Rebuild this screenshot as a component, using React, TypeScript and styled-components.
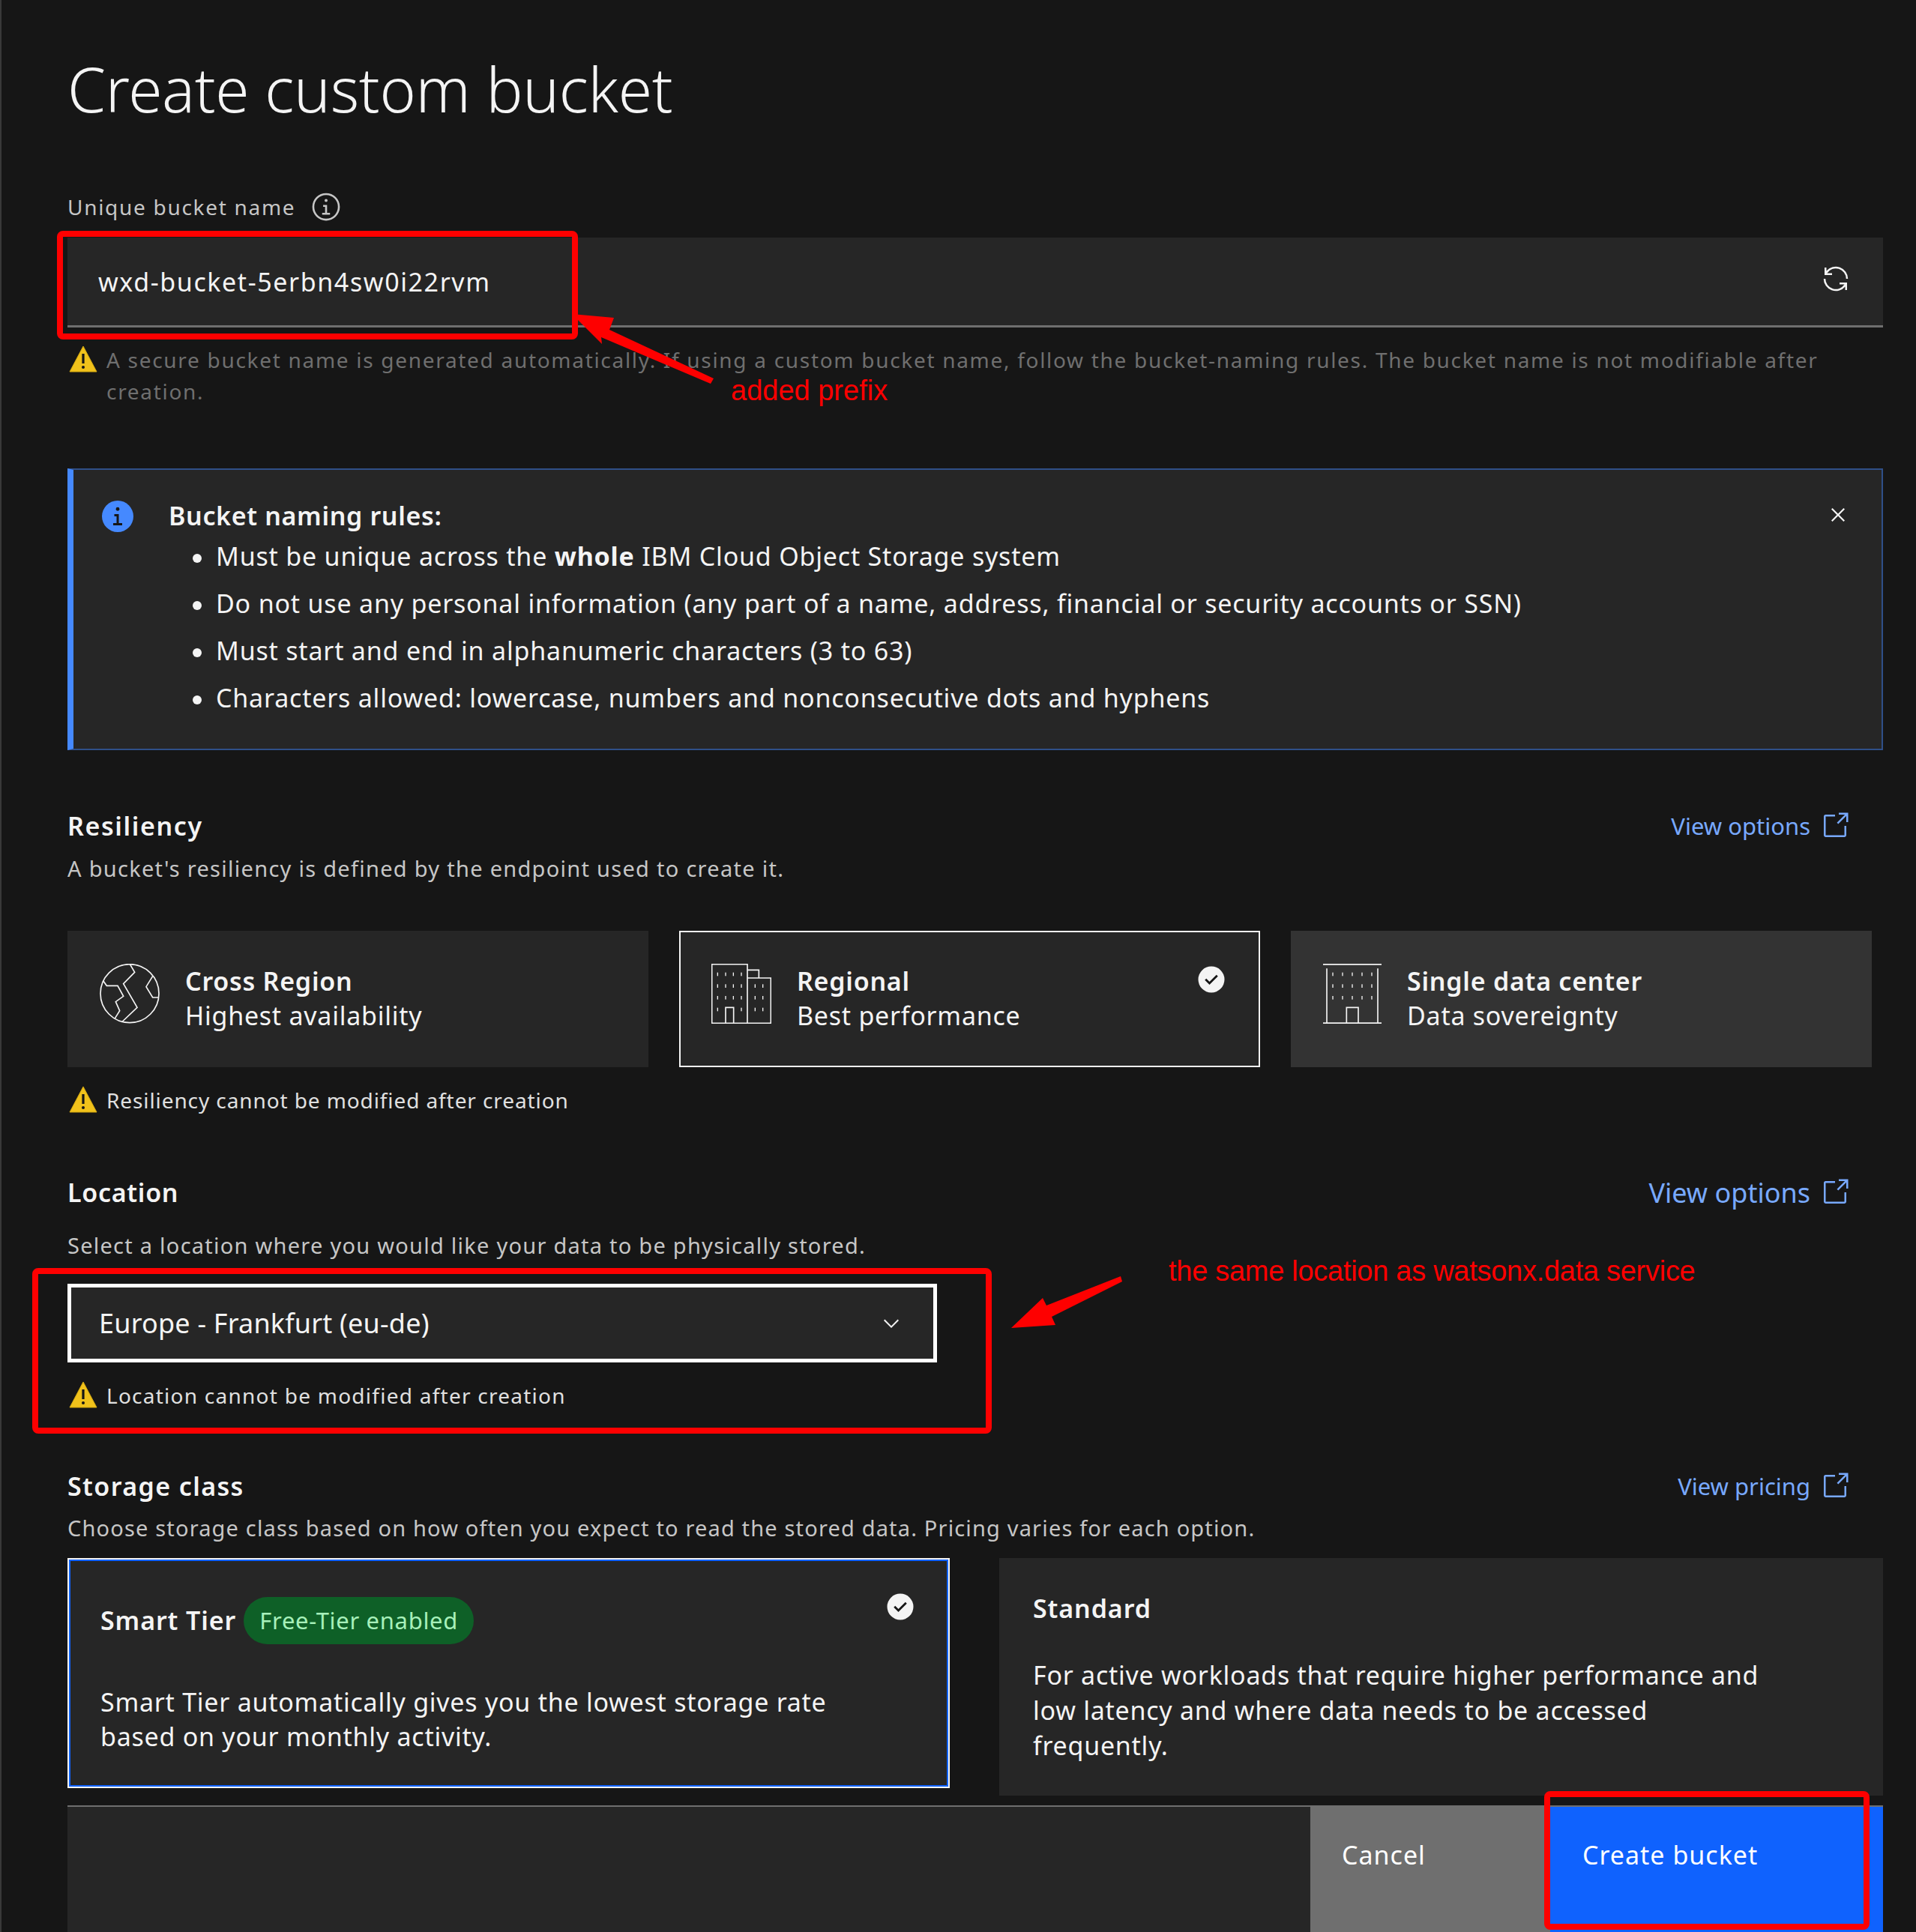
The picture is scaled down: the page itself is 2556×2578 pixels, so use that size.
import React from "react";
import styled, { createGlobalStyle } from "styled-components";

const GlobalStyle = createGlobalStyle`
  html, body { margin: 0; padding: 0; background: #161616; }
  * { box-sizing: border-box; }
`;

const Page = styled.div`
  position: relative;
  width: 2556px;
  height: 2578px;
  overflow: hidden;
  display: flex;
  flex-direction: column;
  background: #161616;
  border-left: 2px solid #393939;
  padding: 0 44px 0 88px;
  font-family: "Noto Sans", "Liberation Sans", sans-serif;
  color: #f4f4f4;
`;

const Title = styled.h1`
  margin: 66px 0 0;
  font-size: 82px;
  line-height: 104px;
  font-weight: 300;
  letter-spacing: -0.3px;
`;

const FieldLabel = styled.div`
  margin-top: 86px;
  height: 40px;
  display: flex;
  align-items: center;
  gap: 20px;
  font-size: 28px;
  letter-spacing: 1.7px;
  color: #c6c6c6;
`;

const InputBar = styled.div`
  margin-top: 21px;
  height: 120px;
  display: flex;
  align-items: center;
  justify-content: space-between;
  padding: 0 43px 0 41px;
  background: #262626;
  border-bottom: 3px solid #6f6f6f;
  font-size: 34px;
  letter-spacing: 1.6px;
  svg { margin-bottom: 8px; }
`;

const Helper = styled.div<{ $top: number; $spacing: number; $dim?: boolean }>`
  margin-top: ${(p) => p.$top}px;
  display: flex;
  gap: 12px;
  padding-left: 2px;
  font-size: 28px;
  line-height: 42px;
  letter-spacing: ${(p) => p.$spacing}px;
  color: ${(p) => (p.$dim ? "#6f6f6f" : "#e0e0e0")};
  svg { flex: none; margin-top: 2px; }
`;

const Notice = styled.div`
  margin-top: 82px;
  height: 376px;
  display: flex;
  padding: 38px 40px 0 35px;
  background: #262626;
  border: 2px solid #2f4f88;
  border-left: 8px solid #4589ff;
  svg:last-child { flex: none; margin-top: 4px; }
`;

const NoticeBody = styled.div`
  flex: 1;
  margin-left: 44px;
`;

const NoticeTitle = styled.div`
  font-size: 34px;
  line-height: 46px;
  font-weight: 600;
  letter-spacing: 0.65px;
`;

const RuleList = styled.ul`
  margin: 0;
  padding: 0 0 0 63px;
  list-style: none;
  font-size: 34px;
  line-height: 63px;
  letter-spacing: 0.8px;
  li::before {
    content: "";
    display: inline-block;
    width: 12px;
    height: 12px;
    margin: 0 19px 4px -31px;
    border-radius: 50%;
    background: #f4f4f4;
  }
`;

const SectionHead = styled.div<{ $top: number }>`
  margin-top: ${(p) => p.$top}px;
  display: flex;
  justify-content: space-between;
  align-items: flex-start;
`;

const Heading = styled.h2<{ $spacing: number }>`
  margin: 0;
  font-size: 34px;
  line-height: 44px;
  font-weight: 600;
  letter-spacing: ${(p) => p.$spacing}px;
`;

const SubText = styled.p<{ $top: number; $spacing: number }>`
  margin: ${(p) => p.$top}px 0 0;
  font-size: 29px;
  line-height: 44px;
  letter-spacing: ${(p) => p.$spacing}px;
  color: #c6c6c6;
`;

const DocLink = styled.a<{ $big?: boolean }>`
  display: flex;
  align-items: center;
  gap: 13px;
  padding-right: 44px;
  height: 44px;
  font-size: ${(p) => (p.$big ? 36 : 31)}px;
  color: #78a9ff;
`;

const TileRow = styled.div`
  margin-top: 61px;
  display: flex;
  gap: 41px;
`;

const Tile = styled.div<{ $selected?: boolean; $raised?: boolean }>`
  position: relative;
  width: 775px;
  height: 182px;
  display: flex;
  align-items: flex-start;
  gap: 34px;
  padding: 44px 0 0 43px;
  background: ${(p) => (p.$raised ? "#333333" : "#262626")};
  box-shadow: ${(p) => (p.$selected ? "inset 0 0 0 2px #f4f4f4" : "none")};
`;

const TileText = styled.div`
  font-size: 34px;
  line-height: 46px;
  letter-spacing: 0.75px;
`;

const TileName = styled.div`
  font-weight: 600;
`;

const CornerCheck = styled.span<{ $top: number; $right: number }>`
  position: absolute;
  top: ${(p) => p.$top}px;
  right: ${(p) => p.$right}px;
  display: flex;
`;

const SelectBox = styled.div`
  margin-top: 29px;
  width: 1160px;
  height: 105px;
  display: flex;
  align-items: center;
  justify-content: space-between;
  padding: 0 40px 0 37px;
  background: #262626;
  border: 5px solid #ffffff;
  font-size: 36px;
  letter-spacing: 0.2px;
`;

const ClassRow = styled.div`
  margin-top: 18px;
  display: flex;
  align-items: flex-start;
  gap: 66px;
`;

const ClassTile = styled.div<{ $selected?: boolean }>`
  position: relative;
  width: ${(p) => (p.$selected ? 1177 : 1179)}px;
  height: ${(p) => (p.$selected ? 307 : 317)}px;
  padding: ${(p) => (p.$selected ? "50px 44px 0 42px" : "44px 44px 0 45px")};
  background: #262626;
  border: ${(p) => (p.$selected ? "2px solid #f4f4f4" : "none")};
  box-shadow: ${(p) => (p.$selected ? "inset 0 0 0 2px #0f62fe" : "none")};
  font-size: 34px;
  line-height: 47px;
  letter-spacing: 0.75px;
`;

const ClassName = styled.div`
  display: flex;
  align-items: center;
  gap: 10px;
  font-weight: 600;
  letter-spacing: 0.9px;
`;

const Pill = styled.span`
  height: 63px;
  display: flex;
  align-items: center;
  padding: 0 21px;
  border-radius: 32px;
  background: #0e6027;
  color: #a7f0ba;
  font-size: 31px;
  font-weight: 400;
  letter-spacing: 0.68px;
`;

const ClassBody = styled.p<{ $top: number; $tight?: boolean }>`
  margin: ${(p) => p.$top}px 0 0;
  max-width: 1000px;
  line-height: ${(p) => (p.$tight ? 46 : 47)}px;
`;

const Footer = styled.div`
  margin-top: 13px;
  flex: 1;
  display: flex;
  justify-content: flex-end;
  background: #262626;
  border-top: 2px solid #6f6f6f;
`;

const FooterButton = styled.button<{ $primary?: boolean }>`
  width: ${(p) => (p.$primary ? 444 : 320)}px;
  padding: 41px 0 0 ${(p) => (p.$primary ? 43 : 42)}px;
  border: none;
  background: ${(p) => (p.$primary ? "#0f62fe" : "#6f6f6f")};
  color: #ffffff;
  font-family: inherit;
  font-size: 34px;
  line-height: 46px;
  letter-spacing: 1px;
  display: flex;
  align-items: flex-start;
`;

const RedBox = styled.div<{ $x: number; $y: number; $w: number; $h: number }>`
  position: absolute;
  left: ${(p) => p.$x - 2}px;
  top: ${(p) => p.$y}px;
  width: ${(p) => p.$w}px;
  height: ${(p) => p.$h}px;
  border: 8px solid #fe0000;
  border-radius: 8px;
`;

const RedNote = styled.span<{ $x: number; $y: number; $tight?: boolean }>`
  position: absolute;
  left: ${(p) => p.$x - 2}px;
  top: ${(p) => p.$y}px;
  font-family: "Liberation Sans", Arial, sans-serif;
  font-size: 38px;
  line-height: 44px;
  letter-spacing: ${(p) => (p.$tight ? -0.28 : 0)}px;
  color: #fe0000;
  white-space: nowrap;
`;

const ArrowLayer = styled.svg`
  position: absolute;
  left: -2px;
  top: 0;
`;

const CarbonIcon = ({ size, color = "#f4f4f4", children }: { size: number; color?: string; children: React.ReactNode }) => (
  <svg width={size} height={size} viewBox="0 0 32 32" fill={color}>
    {children}
  </svg>
);

const WarnIcon = () => (
  <svg width="38" height="36" viewBox="0 0 38 36">
    <path d="M19 1 L37 35 H1 Z" fill="#f1c21b" stroke="#d5a910" strokeWidth="1" />
    <rect x="17.4" y="11" width="3.2" height="13" fill="#161616" />
    <circle cx="19" cy="29" r="2" fill="#161616" />
  </svg>
);

const InfoOutline = () => (
  <CarbonIcon size={42} color="#c6c6c6">
    <polygon points="17 22 17 14 13 14 13 16 15 16 15 22 12 22 12 24 20 24 20 22 17 22" />
    <path d="M16,8a1.5,1.5,0,1,0,1.5,1.5A1.5,1.5,0,0,0,16,8Z" />
    <path d="M16,30A14,14,0,1,1,30,16,14,14,0,0,1,16,30ZM16,4A12,12,0,1,0,28,16,12,12,0,0,0,16,4Z" />
  </CarbonIcon>
);

const InfoFilled = () => (
  <svg width="48" height="48" viewBox="0 0 32 32">
    <circle cx="16" cy="16" r="14" fill="#4589ff" />
    <polygon fill="#161616" points="17 22 17 14 13 14 13 16 15 16 15 22 12 22 12 24 20 24 20 22 17 22" />
    <circle cx="16" cy="9.5" r="1.6" fill="#161616" />
  </svg>
);

const Renew = () => (
  <CarbonIcon size={40}>
    <path d="M12 10H6.78A11 11 0 0 1 27 16h2A13 13 0 0 0 6 7.68V4H4v8h8zM20 22h5.22A11 11 0 0 1 5 16H3a13 13 0 0 0 23 8.32V28h2v-8h-8z" />
  </CarbonIcon>
);

const Close = () => (
  <CarbonIcon size={36}>
    <polygon points="24 9.4 22.6 8 16 14.6 9.4 8 8 9.4 14.6 16 8 22.6 9.4 24 16 17.4 22.6 24 24 22.6 17.4 16 24 9.4" />
  </CarbonIcon>
);

const Launch = () => (
  <CarbonIcon size={40} color="#78a9ff">
    <path d="M26,28H6a2.0027,2.0027,0,0,1-2-2V6A2.0027,2.0027,0,0,1,6,4H16V6H6V26H26V16h2V26A2.0027,2.0027,0,0,1,26,28Z" />
    <polygon points="20 2 20 4 26.586 4 18 12.586 19.414 14 28 5.414 28 12 30 12 30 2 20 2" />
  </CarbonIcon>
);

const Chevron = () => (
  <CarbonIcon size={32}>
    <polygon points="16 22 6 12 7.4 10.6 16 19.2 24.6 10.6 26 12 16 22" />
  </CarbonIcon>
);

const CheckFilled = () => (
  <svg width="40" height="40" viewBox="0 0 32 32">
    <circle cx="16" cy="16" r="12" fill="#161616" />
    <path fill="#f4f4f4" d="M16,2A14,14,0,1,0,30,16,14,14,0,0,0,16,2ZM14,21.5908l-5-5L10.5906,15,14,18.4092,21.41,11l1.5957,1.5859Z" />
  </svg>
);

const GlobeIcon = () => (
  <svg width="80" height="80" viewBox="0 0 240 240" fill="none" stroke="#f4f4f4" strokeWidth="5">
    <circle cx="120" cy="119" r="117" />
    <polyline points="120,0 140,34 95,80 150,175 88,234" />
    <polyline points="14,68 28,88 72,88 95,130 64,152 80,188 60,220" />
    <polyline points="212,50 186,92 212,135 236,135" />
  </svg>
);

const Windows = ({ xs, ys }: { xs: number[]; ys: number[] }) => (
  <>
    {ys.map((y) => xs.map((x) => <rect key={`${x}-${y}`} x={x - 2} y={y - 7} width="4" height="14" fill="#f4f4f4" stroke="none" />))}
  </>
);

const RegionalIcon = () => (
  <svg width="80" height="80" viewBox="60 78 240 240" fill="none" stroke="#f4f4f4" strokeWidth="5">
    <rect x="62" y="80" width="142" height="236" />
    <polyline points="204,103 250,103 250,135" />
    <polyline points="204,135 298,135 298,316 204,316" />
    <polyline points="117,316 117,253 149,253 149,316" />
    <Windows xs={[85, 117, 148, 180]} ys={[120, 167, 214]} />
    <Windows xs={[85, 180]} ys={[261]} />
    <Windows xs={[235, 266]} ys={[167, 214, 261]} />
  </svg>
);

const SingleIcon = () => (
  <svg width="78" height="80" viewBox="78 78 234 240" fill="none" stroke="#f4f4f4" strokeWidth="5">
    <line x1="78" y1="80" x2="312" y2="80" strokeWidth="6" />
    <polyline points="93,97 93,316" />
    <polyline points="297,97 297,316" />
    <line x1="78" y1="316" x2="312" y2="316" strokeWidth="6" />
    <polyline points="172,316 172,253 219,253 219,316" />
    <Windows xs={[117, 156, 195, 234, 273]} ys={[120, 167, 214]} />
  </svg>
);

const App = () => {
  return (
    <Page>
      <GlobalStyle />
      <Title>Create custom bucket</Title>

      <FieldLabel>
        Unique bucket name
        <InfoOutline />
      </FieldLabel>
      <InputBar>
        wxd-bucket-5erbn4sw0i22rvm
        <Renew />
      </InputBar>
      <Helper $top={22} $spacing={1.7} $dim>
        <WarnIcon />
        <div>
          A secure bucket name is generated automatically. If using a custom bucket name, follow the bucket-naming rules. The bucket name is not modifiable after creation.
        </div>
      </Helper>

      <Notice>
        <InfoFilled />
        <NoticeBody>
          <NoticeTitle>Bucket naming rules:</NoticeTitle>
          <RuleList>
            <li>Must be unique across the <b>whole</b> IBM Cloud Object Storage system</li>
            <li>Do not use any personal information (any part of a name, address, financial or security accounts or SSN)</li>
            <li>Must start and end in alphanumeric characters (3 to 63)</li>
            <li>Characters allowed: lowercase, numbers and nonconsecutive dots and hyphens</li>
          </RuleList>
        </NoticeBody>
        <Close />
      </Notice>

      <SectionHead $top={79}>
        <div>
          <Heading $spacing={1.6}>Resiliency</Heading>
          <SubText $top={13} $spacing={1.28}>A bucket's resiliency is defined by the endpoint used to create it.</SubText>
        </div>
        <DocLink>View options <Launch /></DocLink>
      </SectionHead>
      <TileRow>
        <Tile>
          <GlobeIcon />
          <TileText>
            <TileName>Cross Region</TileName>
            Highest availability
          </TileText>
        </Tile>
        <Tile $selected>
          <RegionalIcon />
          <TileText>
            <TileName>Regional</TileName>
            Best performance
          </TileText>
          <CornerCheck $top={45} $right={45}><CheckFilled /></CornerCheck>
        </Tile>
        <Tile $raised>
          <SingleIcon />
          <TileText>
            <TileName>Single data center</TileName>
            Data sovereignty
          </TileText>
        </Tile>
      </TileRow>
      <Helper $top={23} $spacing={0.9}>
        <WarnIcon />
        Resiliency cannot be modified after creation
      </Helper>

      <SectionHead $top={80}>
        <div>
          <Heading $spacing={0.7}>Location</Heading>
          <SubText $top={27} $spacing={1.25}>Select a location where you would like your data to be physically stored.</SubText>
        </div>
        <DocLink $big>View options <Launch /></DocLink>
      </SectionHead>
      <SelectBox>
        Europe - Frankfurt (eu-de)
        <Chevron />
      </SelectBox>
      <Helper $top={23} $spacing={1.25}>
        <WarnIcon />
        Location cannot be modified after creation
      </Helper>

      <SectionHead $top={78}>
        <div>
          <Heading $spacing={1.4}>Storage class</Heading>
          <SubText $top={12} $spacing={1.16}>Choose storage class based on how often you expect to read the stored data. Pricing varies for each option.</SubText>
        </div>
        <DocLink>View pricing <Launch /></DocLink>
      </SectionHead>
      <ClassRow>
        <ClassTile $selected>
          <ClassName>
            Smart Tier
            <Pill>Free-Tier enabled</Pill>
          </ClassName>
          <ClassBody $top={54} $tight>
            Smart Tier automatically gives you the lowest storage rate based on your monthly activity.
          </ClassBody>
          <CornerCheck $top={43} $right={44}><CheckFilled /></CornerCheck>
        </ClassTile>
        <ClassTile>
          <ClassName>Standard</ClassName>
          <ClassBody $top={42}>
            For active workloads that require higher performance and low latency and where data needs to be accessed frequently.
          </ClassBody>
        </ClassTile>
      </ClassRow>

      <Footer>
        <FooterButton>Cancel</FooterButton>
        <FooterButton $primary>Create bucket</FooterButton>
      </Footer>

      <RedBox $x={76} $y={308} $w={695} $h={145} />
      <RedBox $x={43} $y={1692} $w={1280} $h={221} />
      <RedBox $x={2060} $y={2390} $w={434} $h={185} />
      <ArrowLayer width="2556" height="2578" viewBox="0 0 2556 2578">
        <polygon fill="#fe0000" points="763,419 819,424 813,440 952,505 948,512 802,450 803,459" />
        <polygon fill="#fe0000" points="1349,1772 1391,1732 1396,1742 1495,1703 1497,1710 1403,1757 1408,1768" />
      </ArrowLayer>
      <RedNote $x={975} $y={499}>added prefix</RedNote>
      <RedNote $x={1559} $y={1674} $tight>the same location as watsonx.data service</RedNote>
    </Page>
  );
};

export default App;
